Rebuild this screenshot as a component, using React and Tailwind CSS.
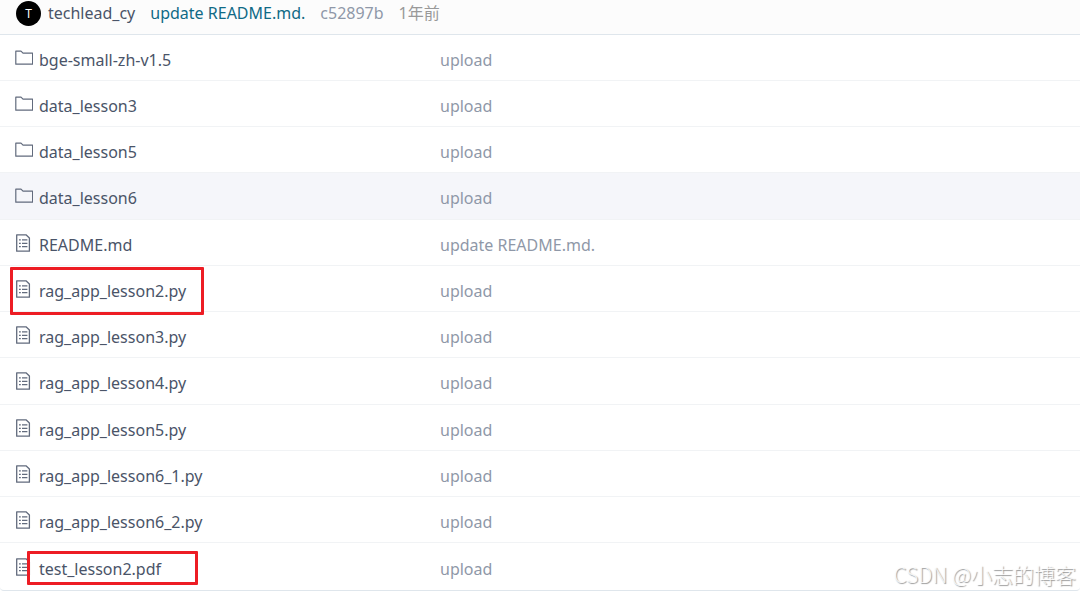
import React from 'react';

const FILES = [
  { name: 'bge-small-zh-v1.5', type: 'folder', message: 'upload' },
  { name: 'data_lesson3', type: 'folder', message: 'upload' },
  { name: 'data_lesson5', type: 'folder', message: 'upload' },
  { name: 'data_lesson6', type: 'folder', message: 'upload', active: true },
  { name: 'README.md', type: 'file', message: 'update README.md.' },
  { name: 'rag_app_lesson2.py', type: 'file', message: 'upload', mark: 'row' },
  { name: 'rag_app_lesson3.py', type: 'file', message: 'upload' },
  { name: 'rag_app_lesson4.py', type: 'file', message: 'upload' },
  { name: 'rag_app_lesson5.py', type: 'file', message: 'upload' },
  { name: 'rag_app_lesson6_1.py', type: 'file', message: 'upload' },
  { name: 'rag_app_lesson6_2.py', type: 'file', message: 'upload' },
  { name: 'test_lesson2.pdf', type: 'file', message: 'upload', mark: 'name' },
];

// Red annotation frames drawn over the list
const MARKS = {
  row: 'left-[10px] top-[1px] w-[194px] h-[48px]',
  name: 'left-[27px] top-[8px] w-[171px] h-[34px]',
};

function FolderIcon() {
  return (
    <svg className="w-[18px] h-[18px] shrink-0" viewBox="0 0 18 18" fill="none" stroke="#626b7d" strokeWidth="1.2" strokeLinejoin="round">
      <path d="M0.8 2.2H6L8 4.2H17.6V15.2H0.8Z" />
    </svg>
  );
}

function FileIcon() {
  return (
    <svg className="w-[18px] h-[18px] shrink-0" viewBox="0 0 18 18" fill="none" stroke="#626b7d" strokeWidth="1.3" strokeLinejoin="round">
      <path d="M1.7 0.8H11L14.4 4V17.2H1.7Z" />
      <path d="M4 5.9H5.8M4 9.3H5.8M4 12.7H5.8M7 5.9H12.4M7 9.3H12.4M7 12.7H12.4" />
    </svg>
  );
}

function FileRow({ file }) {
  return (
    <tr className={`group h-[46px] nth-[4n]:h-[47px] ${file.active ? 'bg-[#f5f6fa]' : ''}`}>
      <td className="relative p-0 pt-1 pl-[15px] border-b border-[#f1f3f5] group-last:border-b-0">
        <a href="#" className="flex items-center gap-[6px] text-[#4a5468]">
          <span className="flex pb-1">
            {file.type === 'folder' ? <FolderIcon /> : <FileIcon />}
          </span>
          {file.name}
        </a>
        {file.mark && (
          <span className={`absolute z-10 border-3 border-[#ed1c24] rounded-[1px] pointer-events-none ${MARKS[file.mark]}`} />
        )}
      </td>
      <td className="p-0 pt-1 text-[#8f98a8] border-b border-[#f1f3f5] group-last:border-b-0">{file.message}</td>
    </tr>
  );
}

export default function App() {
  return (
    <div className="relative bg-white font-['Noto_Sans','Noto_Sans_CJK_SC',sans-serif] text-[16px] leading-6">
      <div className="border-b border-[#dfe6ec] rounded-b-[4px] overflow-hidden">
        {/* Latest commit */}
        <header className="flex items-start h-[35px] pl-4 pt-[1px] bg-[#fcfcfc] border-b border-[#dfe6ec]">
          <span className="flex items-center justify-center w-[25px] h-[25px] rounded-full bg-black text-white text-[12px]">
            T
          </span>
          <a href="#" className="ml-[7px] text-[#4a5468]">techlead_cy</a>
          <a href="#" className="ml-[15px] text-[#106a86]">update README.md.</a>
          <a href="#" className="ml-[15px] text-[#8f98a8]">c52897b</a>
          <span className="ml-[15px] text-[#999999]">1年前</span>
        </header>

        {/* File list */}
        <table className="w-full table-fixed border-separate border-spacing-0">
          <colgroup>
            <col className="w-[440px]" />
            <col />
          </colgroup>
          <tbody>
            {FILES.map((file) => (
              <FileRow key={file.name} file={file} />
            ))}
          </tbody>
        </table>
      </div>

      {/* Watermark */}
      <span className="absolute right-1 bottom-[3px] text-[21px] leading-7 font-light text-white/80 font-['Noto_Sans_CJK_SC',sans-serif] [text-shadow:1px_1px_1px_#999999]">
        CSDN @小志的博客
      </span>
    </div>
  );
}
